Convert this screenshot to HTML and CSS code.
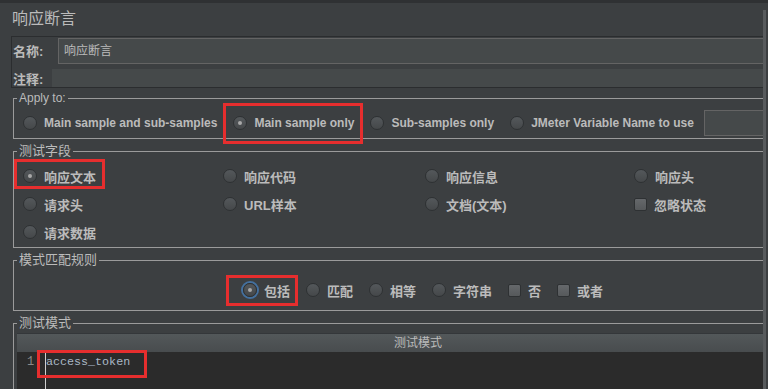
FILE: index.html
```html
<!DOCTYPE html>
<html lang="zh-CN">
<head>
    <meta charset="UTF-8">
    <meta name="viewport" content="width=device-width, initial-scale=1.0">
    <title>响应断言</title>
    <link rel="stylesheet" href="styles.css">
</head>
<body>
    <div class="topbar"></div>
    <div class="frame">
        <div class="title">响应断言</div>

        <div class="namebox">
            <div class="name-row">
                <label class="name-label">名称:</label>
                <div class="name-field">响应断言</div>
            </div>
            <div class="comment-row">
                <label class="name-label comment-label">注释:</label>
                <div class="comment-field"></div>
            </div>
        </div>

        <fieldset class="group">
            <legend>Apply to:</legend>
            <div class="apply-row">
                <span class="opt"><span class="radio"></span>Main sample and sub-samples</span>
                <span class="opt mark mark-main"><span class="radio on"></span>Main sample only</span>
                <span class="opt"><span class="radio"></span>Sub-samples only</span>
                <span class="opt"><span class="radio"></span>JMeter Variable Name to use</span>
                <span class="var-field"></span>
            </div>
        </fieldset>

        <fieldset class="group">
            <legend class="cn">测试字段</legend>
            <div class="field-grid">
                <span class="opt cn mark mark-text"><span class="radio on"></span>响应文本</span>
                <span class="opt cn"><span class="radio"></span>响应代码</span>
                <span class="opt cn"><span class="radio"></span>响应信息</span>
                <span class="opt cn"><span class="radio"></span>响应头</span>

                <span class="opt cn"><span class="radio"></span>请求头</span>
                <span class="opt cn"><span class="radio"></span>URL样本</span>
                <span class="opt cn"><span class="radio"></span>文档(文本)</span>
                <span class="opt cn"><span class="check"></span>忽略状态</span>

                <span class="opt cn"><span class="radio"></span>请求数据</span>
            </div>
        </fieldset>

        <fieldset class="group">
            <legend class="cn">模式匹配规则</legend>
            <div class="rule-row">
                <span class="opt cn mark mark-rule"><span class="radio on focus"></span>包括</span>
                <span class="opt cn"><span class="radio"></span>匹配</span>
                <span class="opt cn"><span class="radio"></span>相等</span>
                <span class="opt cn"><span class="radio"></span>字符串</span>
                <span class="opt cn"><span class="check"></span>否</span>
                <span class="opt cn"><span class="check"></span>或者</span>
            </div>
        </fieldset>

        <fieldset class="group">
            <legend class="cn">测试模式</legend>
            <div class="table-head">测试模式</div>
            <div class="editor">
                <div class="gutter">1</div>
                <div class="code"><span class="mark mark-code">access_token</span></div>
            </div>
        </fieldset>
    </div>
</body>
</html>
```

FILE: styles.css
```css
body {
    margin: 0;
    height: 389px;
    overflow: hidden;
    background: #3c3f41;
    color: #bbbbbb;
    font-family: "Liberation Sans", "Noto Sans CJK SC", sans-serif;
    font-size: 12px;
}
.topbar {
    height: 3px;
    background: #2f3133;
}
.frame {
    margin-top: 7px;
    margin-right: 2px;
    height: 379px;
    border-right: 3px solid #585b5d;
}
.title {
    height: 26px;
    padding-left: 12px;
    font-size: 16px;
    line-height: 18px;
}

/* name / comment */
.namebox {
    margin-left: 11px;
    border: 1px solid #2b2d2f;
    border-right: none;
}
.name-row {
    display: flex;
    align-items: flex-end;
    height: 27px;
}
.name-label {
    width: 45px;
    padding-left: 1px;
    align-self: center;
    font-size: 13px;
    font-weight: bold;
}
.comment-label {
    width: 39px;
}
.name-field {
    flex: 1;
    height: 26px;
    box-sizing: border-box;
    padding-left: 5px;
    line-height: 24px;
    background: #45494a;
    border-top: 1px solid #646464;
    border-bottom: 1px solid #646464;
    border-left: 1px solid #646464;
}
.comment-row {
    display: flex;
    height: 18px;
    margin-top: 5px;
}
.comment-field {
    flex: 1;
    background: #45494a;
}

/* titled groups */
.group {
    margin: 3px 0 0 13px;
    padding: 0 0 0 3px;
    border: 1px solid #9b9b9b;
    border-right: none;
    min-width: 0;
}
.group + .group {
    margin-top: 5px;
}
.group legend {
    padding: 0 2px;
    font-size: 12px;
    line-height: 14px;
}
.group legend.cn {
    font-size: 13px;
}

.opt {
    display: flex;
    align-items: center;
    gap: 7px;
    height: 16px;
    font-weight: bold;
    white-space: nowrap;
}
.opt.cn {
    font-size: 13px;
}
.radio {
    flex: none;
    position: relative;
    width: 14px;
    height: 14px;
    box-sizing: border-box;
    border-radius: 50%;
    border: 1px solid #2e3133;
    background: linear-gradient(#54585b, #45484a);
}
.radio.on::after {
    content: "";
    position: absolute;
    left: 4px;
    top: 4px;
    width: 4px;
    height: 4px;
    border-radius: 50%;
    background: #a9a9a9;
}
.radio.focus {
    box-shadow: 0 0 0 2px #44709e;
}
.check {
    flex: none;
    width: 13px;
    height: 13px;
    box-sizing: border-box;
    border-radius: 2px;
    border: 1px solid #2e3133;
    background: linear-gradient(#65686b, #56595b);
}

.apply-row {
    display: flex;
    align-items: center;
    gap: 16px;
    padding: 5px 0 2px 6px;
}
.var-field {
    flex: 1;
    min-width: 0;
    height: 26px;
    margin-left: -6px;
    box-sizing: border-box;
    background: #45494a;
    border: 1px solid #646464;
    border-right: none;
}

.field-grid {
    display: grid;
    grid-template-columns: 200px 202px 209px 1fr;
    grid-auto-rows: 28px;
    align-items: center;
    justify-items: start;
    padding: 4px 0 1px 6px;
}

.rule-row {
    display: flex;
    align-items: center;
    gap: 16px;
    height: 30px;
    padding: 8px 0 5px 226px;
}

.table-head {
    height: 19px;
    margin-top: 3px;
    padding-left: 56px;
    box-sizing: border-box;
    border-top: 1px solid #34373a;
    background: linear-gradient(#53585a, #484c4e);
    text-align: center;
    line-height: 18px;
    font-size: 12px;
}
.editor {
    display: flex;
    height: 50px;
    background: #2b2b2b;
}
.gutter {
    width: 29px;
    box-sizing: border-box;
    padding: 2px 0 0 10px;
    border-right: 1px solid #cfcfcf;
    color: #8a8a8a;
    font-family: "Liberation Mono", monospace;
    font-size: 12px;
    line-height: 16px;
}
.code {
    padding-top: 2px;
    color: #a9b7c6;
    font-family: "Liberation Mono", "DejaVu Sans Mono", monospace;
    font-size: 11.7px;
    line-height: 16px;
}

/* red annotation boxes */
.mark {
    position: relative;
}
.mark::after {
    content: "";
    position: absolute;
    border: 3px solid #e62e2e;
}
.mark-main::after {
    left: -10px;
    right: -9px;
    top: -12px;
    bottom: -13px;
}
.mark-text::after {
    left: -9px;
    right: -9px;
    top: -9px;
    bottom: -5px;
}
.mark-rule::after {
    left: -17px;
    right: -8px;
    top: -7px;
    bottom: -8px;
}
.mark-code {
    display: inline-block;
}
.mark-code::after {
    left: -9px;
    right: -17px;
    top: -4px;
    bottom: -8px;
}
```
